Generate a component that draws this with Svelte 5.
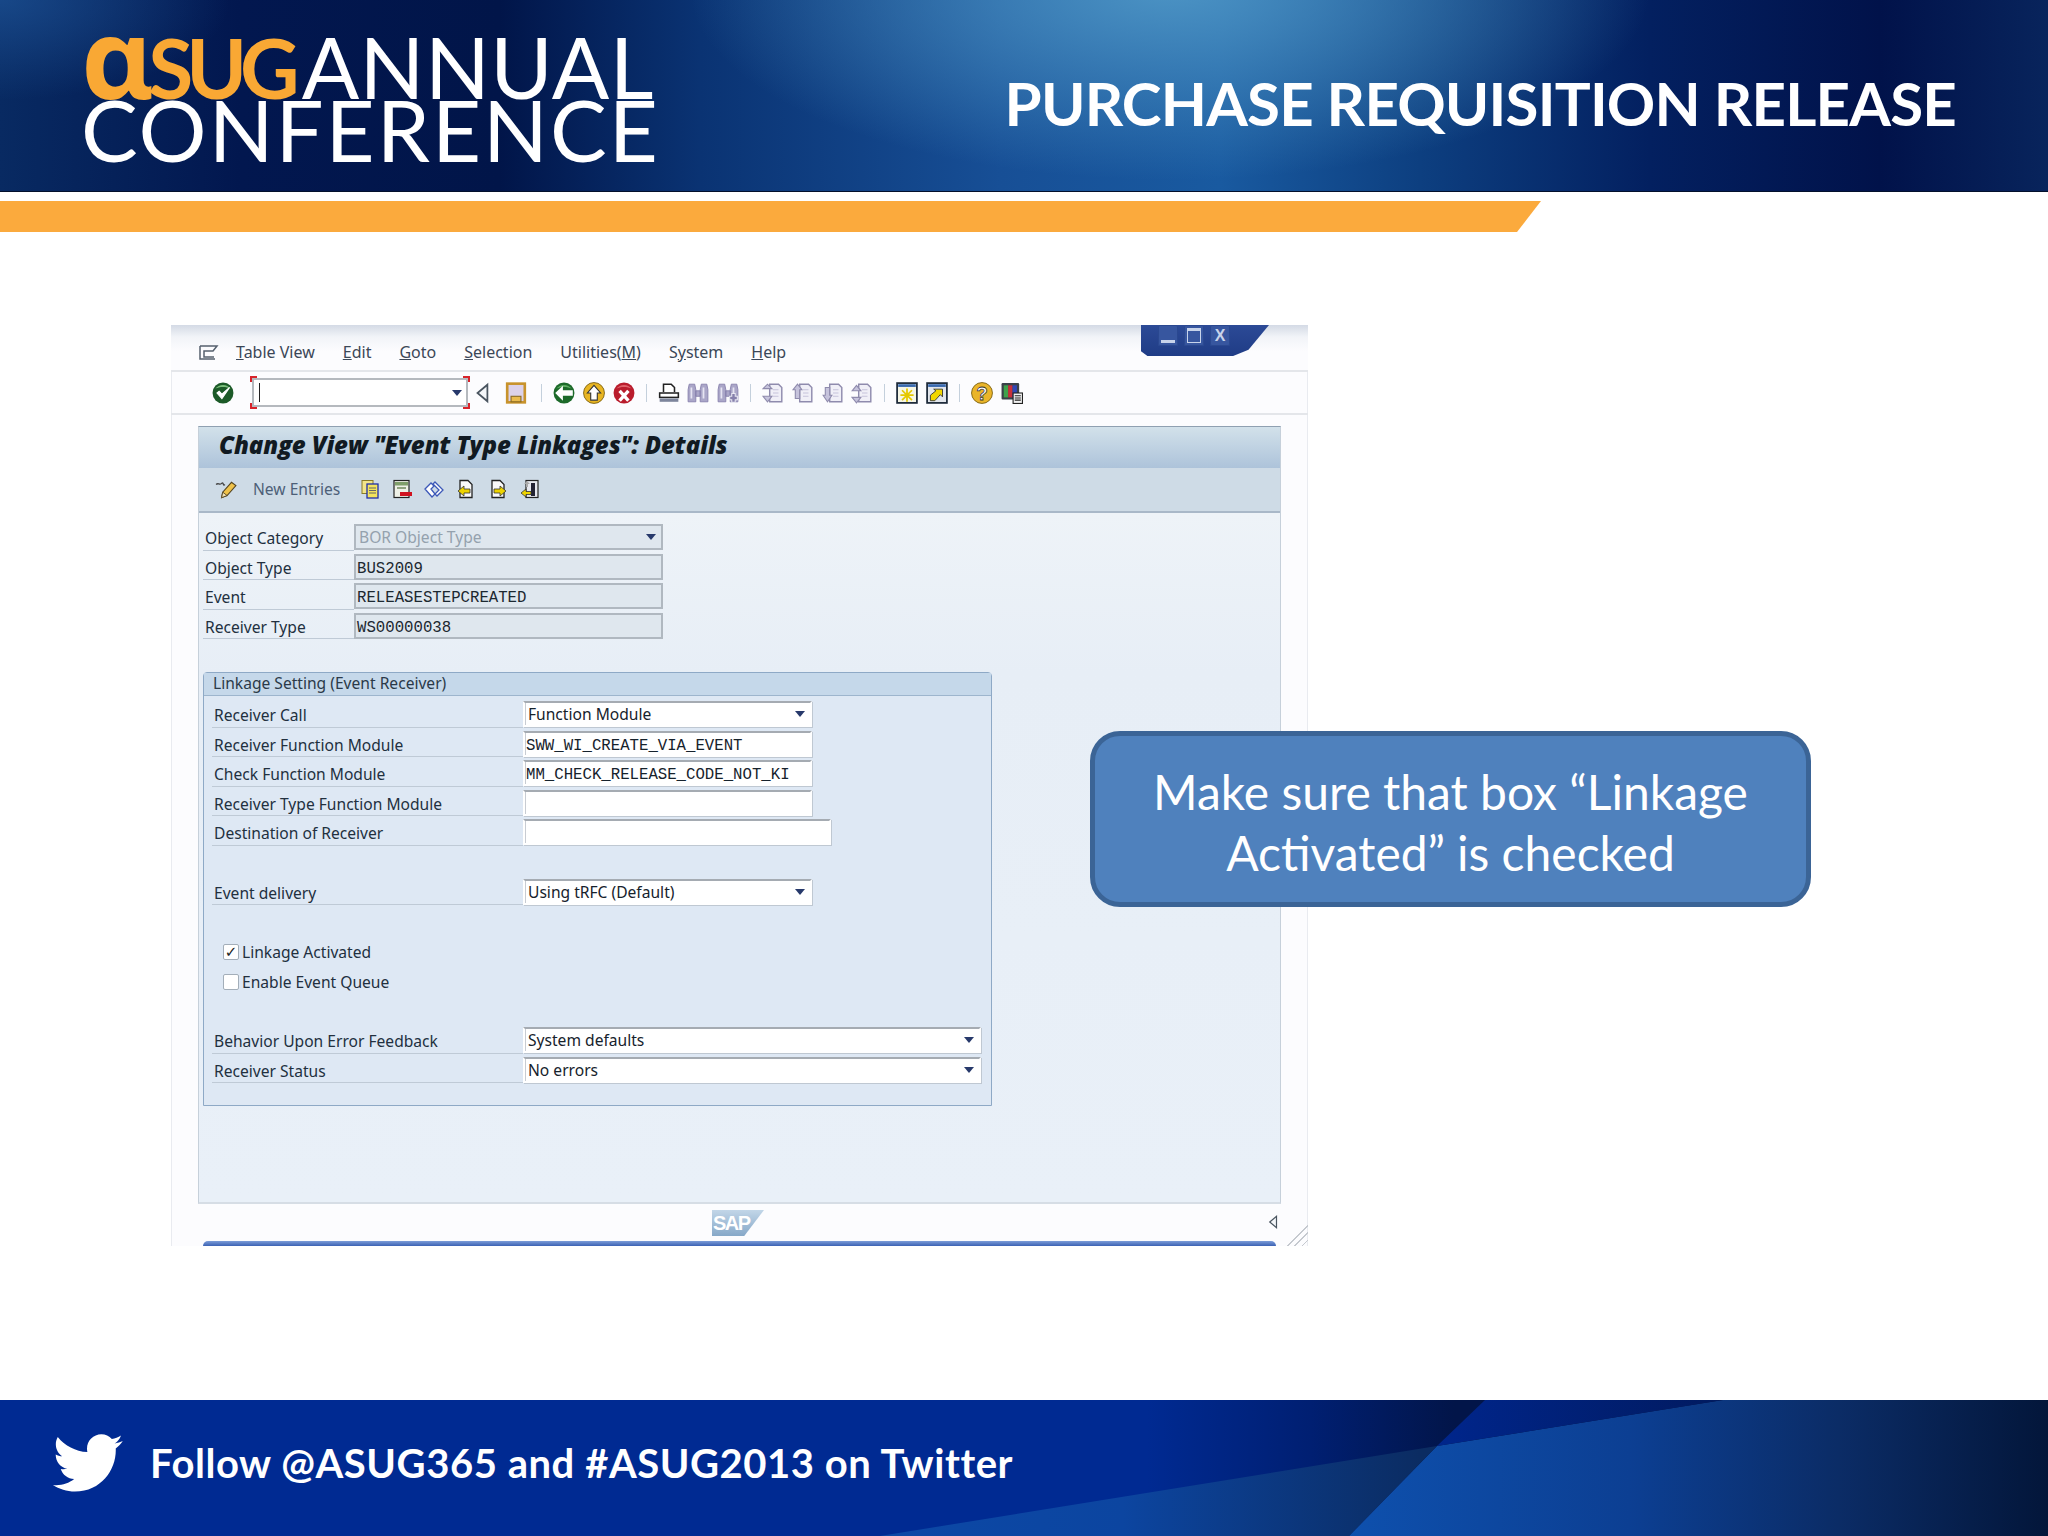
<script>
  const menus = [
    { u: 'T', rest: 'able View' },
    { u: 'E', rest: 'dit' },
    { u: 'G', rest: 'oto' },
    { u: 'S', rest: 'election' },
    { pre: 'Utilities(', u: 'M', rest: ')' },
    { pre: 'S', u: 'y', rest: 'stem' },
    { u: 'H', rest: 'elp' },
  ]
  const headerRows = [
    { label: 'Object Category', value: 'BOR Object Type', select: true },
    { label: 'Object Type', value: 'BUS2009', mono: true },
    { label: 'Event', value: 'RELEASESTEPCREATED', mono: true },
    { label: 'Receiver Type', value: 'WS00000038', mono: true },
  ]
  const receiverRows = [
    { label: 'Receiver Call', value: 'Function Module', select: true },
    { label: 'Receiver Function Module', value: 'SWW_WI_CREATE_VIA_EVENT', mono: true },
    { label: 'Check Function Module', value: 'MM_CHECK_RELEASE_CODE_NOT_KI', mono: true },
    { label: 'Receiver Type Function Module', value: '' },
    { label: 'Destination of Receiver', value: '', size: 'mid' },
  ]
  const errorRows = [
    { label: 'Behavior Upon Error Feedback', value: 'System defaults', select: true, size: 'long' },
    { label: 'Receiver Status', value: 'No errors', select: true, size: 'long' },
  ]
</script>

{#snippet icon(name)}
  <svg class="icon" viewBox="0 0 20 20" aria-hidden="true">
    {#if name === 'check'}
      <circle cx="10" cy="10" r="9.5" fill="#1c5a28" />
      <path d="M3 6a9 9 0 0 1 14 0c-4-2-10-2-14 0z" fill="#7cc07c" />
      <path d="M4.5 10l4.5 5 7-10-7 6-2.5-2.5z" fill="#fff" stroke="#fff" stroke-width="1" />
    {:else if name === 'tri'}
      <path d="M14 2.5v15L5 10z" fill="#f4f6f9" stroke="#4a5560" stroke-width="1.6" />
    {:else if name === 'save'}
      <rect x="2" y="1.500" width="16" height="17" fill="#dcd2ea" stroke="#c8932c" stroke-width="2.4" />
      <rect x="5.500" y="13" width="9" height="5" fill="#eabb4e" stroke="#8a6a22" />
    {:else if name === 'back'}
      <circle cx="10" cy="10" r="9.5" fill="#1d6a2a" />
      <path d="M3 6a9 9 0 0 1 14 0c-4-2-10-2-14 0z" fill="#5fae62" />
      <path d="M2 10l7-6.5v4h9v5H9V17z" fill="#fff" />
    {:else if name === 'up'}
      <circle cx="10" cy="10" r="9.5" fill="#e8b522" stroke="#7a5e10" stroke-width=".8" />
      <path d="M10 3l6 7h-3v6.5H7V10H4z" fill="#fff" stroke="#333" stroke-width="1" />
    {:else if name === 'cancel'}
      <circle cx="10" cy="10" r="9.5" fill="#b91c2c" />
      <path d="M3 6a9 9 0 0 1 14 0c-4-2-10-2-14 0z" fill="#e0626a" />
      <path d="M6 8l8 9M14 8l-8 9" stroke="#fff" stroke-width="3" />
    {:else if name === 'print'}
      <path d="M5 9V2h7l3 3v4" fill="#fff" stroke="#222" stroke-width="1.4" />
      <rect x="1.5" y="10" width="17" height="4" fill="#fff" stroke="#222" stroke-width="1.4" />
      <rect x="1.5" y="15" width="17" height="3" fill="#7d859c" />
    {:else if name === 'find' || name === 'findnext'}
      <path d="M1 7l1-5h5l1 5v11H1zM12 7l1-5h5l1 5v11h-7zM8 8h4v5H8z" fill="#aaa6c8" stroke="#8680ac" stroke-width=".8" />
      <path d="M4 5v10M15 5v10" stroke="#e6e4f2" stroke-width="1.6" />
      {#if name === 'findnext'}
        <path d="M15 10v9M11 14.5h8" stroke="#e8e8f2" stroke-width="4" />
        <path d="M15 11v7M12 14.5h6" stroke="#8680ac" stroke-width="2.2" />
      {/if}
    {:else if name === 'first' || name === 'prev' || name === 'next' || name === 'last'}
      <path d="M7 2h8l3 3v13H7z" fill="#f0eff7" stroke="#8f8bad" stroke-width="1.3" />
      <path d="M10 7h5M10 10h5M10 13h5" stroke="#c6c3dc" />
      {#if name === 'first'}
        <path d="M1 6l4-4 4 4zM1 13l4 5 4-5z" fill="#c6c3dc" stroke="#8f8bad" />
      {:else if name === 'prev'}
        <path d="M1 7l4-5 4 5H7v8H3V7z" fill="#c6c3dc" stroke="#8f8bad" />
      {:else if name === 'next'}
        <path d="M1 12l4 6 4-6H7V5H3v7z" fill="#c6c3dc" stroke="#8f8bad" />
      {:else}
        <path d="M1 8l4-5 4 5zM1 14l4 5 4-5z" fill="#c6c3dc" stroke="#8f8bad" />
      {/if}
    {:else if name === 'session'}
      <rect x="1" y="1" width="18" height="18" fill="#f6f6e6" stroke="#1d2a3a" stroke-width="1.6" />
      <rect x="2" y="2" width="16" height="2.5" fill="#3a6ab0" />
      <path d="M10 6v12M4 12h12M5.5 7.5l9 9M14.5 7.5l-9 9" stroke="#e5c800" stroke-width="1.6" />
    {:else if name === 'shortcut'}
      <rect x="1" y="1" width="18" height="18" fill="#e2e6ec" stroke="#1d2a3a" stroke-width="1.6" />
      <rect x="2" y="2" width="16" height="2.5" fill="#3a6ab0" />
      <path d="M4 17v-5l5-4-2-1.5h8v7l-2-2-5 5.500z" fill="#f2d700" stroke="#333" stroke-width=".8" />
    {:else if name === 'help'}
      <circle cx="10" cy="10" r="9.5" fill="#eab52a" stroke="#7a5e10" stroke-width=".8" />
      <text x="10" y="16" text-anchor="middle" font-size="17" font-weight="700" font-family="Liberation Sans, sans-serif" fill="#fff" stroke="#333" stroke-width=".7">?</text>
    {:else if name === 'layout'}
      <rect x="0.5" y="1" width="16" height="15" rx="1" fill="#3a4149" />
      <rect x="2.5" y="3" width="4" height="11" fill="#3fa24c" />
      <rect x="6.500" y="3" width="4" height="11" fill="#c9303a" />
      <rect x="10.5" y="3" width="4" height="11" fill="#3147b5" />
      <rect x="11" y="10" width="8.500" height="9.500" fill="#f2f2f2" stroke="#222" />
      <path d="M12.5 12.5h5.500M12.5 14.5h5.500M12.5 16.5h5.500" stroke="#222" />
    {:else if name === 'pencil'}
      <path d="M6 17l1-5 8-9 4 3-8 9z" fill="#efc24a" stroke="#554520" stroke-width="1" />
      <path d="M6 17l1-5 4 3z" fill="#f3e2b5" stroke="#554520" stroke-width=".8" />
      <path d="M1 5c2-2 3 1 5-1s1 3 3 1" fill="none" stroke="#444" stroke-width="1.2" />
    {:else if name === 'copy'}
      <rect x="2" y="1.5" width="11" height="13" fill="#f2e58a" stroke="#8a7b26" />
      <rect x="7" y="5" width="11" height="14" fill="#f3e35e" stroke="#1f2fa8" stroke-width="1.3" />
      <path d="M9 9h7M9 11.5h7M9 14h7" stroke="#666" />
    {:else if name === 'delete'}
      <rect x="2" y="1.5" width="15" height="17" fill="#eef0e6" stroke="#222" stroke-width="1.2" />
      <rect x="3" y="3" width="13" height="3.5" fill="#7f9e6a" />
      <rect x="5" y="8" width="9" height="2" fill="#8fa27f" />
      <rect x="8" y="13" width="12" height="4" fill="#d0121f" />
    {:else if name === 'undo'}
      <path d="M1 10l6-6 3 3-3 3 4 5-3 3zM11 3l8 8-6 6-2-2 4-4-6-6z" fill="#fff" stroke="#3c58b8" stroke-width="1.3" />
    {:else if name === 'pgprev' || name === 'pgnext' || name === 'pglast'}
      {#if name === 'pglast'}
        <rect x="6" y="1.5" width="12" height="17" fill="#e6e8ee" stroke="#222" stroke-width="1.2" />
        <path d="M13 4v13" stroke="#223" stroke-width="4" />
        <path d="M7 2l-3 3h2v3h2V5h2z" fill="#aaa" />
        <path d="M1 14l5-4v2.5h5v3H6V18z" fill="#eed400" stroke="#333" stroke-width=".8" />
      {:else}
        <path d="M4 1.5h8l4 4v13H4z" fill="#fafafa" stroke="#222" stroke-width="1.3" />
        {#if name === 'pgprev'}
          <path d="M2 12l6-5v3h6v4H8v3z" fill="#eed400" stroke="#333" stroke-width=".8" />
        {:else}
          <path d="M18 12l-6-5v3H6v4h6v3z" fill="#eed400" stroke="#333" stroke-width=".8" />
        {/if}
      {/if}
    {:else if name === 'menu'}
      <path d="M1.5 4h17l-4 5h-9v6h10M1.5 4v13h15" fill="none" stroke="#55606e" stroke-width="1.5" />
    {/if}
  </svg>
{/snippet}

{#snippet arrow()}
  <span class="arrow"></span>
{/snippet}

{#snippet row(r)}
  <div class="row">
    <span class="label">{r.label}</span>
    <span class="field {r.size ?? ''}" class:mono={r.mono}>
      {r.value}
      {#if r.select}{@render arrow()}{/if}
    </span>
  </div>
{/snippet}

<div class="slide">
  <header class="banner">
    <div class="logo">
      <div class="logo-line"><span class="asug"><span class="round">ɑ</span>SUG</span><span class="annual">ANNUAL</span></div>
      <div class="logo-line conf">CONFERENCE</div>
    </div>
    <h1>PURCHASE REQUISITION RELEASE</h1>
  </header>
  <div class="stripe"></div>

  <main class="main">
    <div class="window">
      <div class="menubar">
        <span class="menu-icon">{@render icon('menu')}</span>
        {#each menus as m}
          <span class="menu">{m.pre ?? ''}<u>{m.u}</u>{m.rest}</span>
        {/each}
        <div class="win-tab">
          <span class="win-btn"><i class="min"></i></span>
          <span class="win-btn"><i class="max"></i></span>
          <span class="win-btn">X</span>
        </div>
      </div>

      <div class="toolbar">
        <span class="slot">{@render icon('check')}</span>
        <span class="ok-field"><span class="caret"></span>{@render arrow()}</span>
        <span class="slot tri">{@render icon('tri')}</span>
        <span class="slot save">{@render icon('save')}</span>
        <span class="sep first-sep"></span>
        <span class="slot">{@render icon('back')}</span>
        <span class="slot">{@render icon('up')}</span>
        <span class="slot">{@render icon('cancel')}</span>
        <span class="sep"></span>
        <span class="slot">{@render icon('print')}</span>
        <span class="slot">{@render icon('find')}</span>
        <span class="slot">{@render icon('findnext')}</span>
        <span class="sep"></span>
        <span class="slot">{@render icon('first')}</span>
        <span class="slot">{@render icon('prev')}</span>
        <span class="slot">{@render icon('next')}</span>
        <span class="slot">{@render icon('last')}</span>
        <span class="sep"></span>
        <span class="slot">{@render icon('session')}</span>
        <span class="slot">{@render icon('shortcut')}</span>
        <span class="sep"></span>
        <span class="slot">{@render icon('help')}</span>
        <span class="slot">{@render icon('layout')}</span>
      </div>

      <section class="panel">
        <h2>Change View "Event Type Linkages": Details</h2>
        <div class="app-bar">
          <span class="tool pencil">{@render icon('pencil')}</span>
          <span class="new">New Entries</span>
          <span class="tool">{@render icon('copy')}</span>
          <span class="tool">{@render icon('delete')}</span>
          <span class="tool">{@render icon('undo')}</span>
          <span class="tool">{@render icon('pgprev')}</span>
          <span class="tool">{@render icon('pgnext')}</span>
          <span class="tool">{@render icon('pglast')}</span>
        </div>

        <div class="content">
          <div class="head-rows">
            {#each headerRows as r}{@render row(r)}{/each}
          </div>

          <div class="group">
            <div class="group-title">Linkage Setting (Event Receiver)</div>
            <div class="group-body">
              {#each receiverRows as r}{@render row(r)}{/each}
              <div class="delivery">
                {@render row({ label: 'Event delivery', value: 'Using tRFC (Default)', select: true })}
              </div>
              <div class="checks">
                <div class="check-row"><span class="box">✓</span>Linkage Activated</div>
                <div class="check-row"><span class="box"></span>Enable Event Queue</div>
              </div>
              {#each errorRows as r}{@render row(r)}{/each}
            </div>
          </div>
        </div>
      </section>

      <footer class="status">
        <span class="sap">SAP</span>
        <span class="status-tri">{@render icon('tri')}</span>
        <span class="grip"></span>
        <span class="task-bar"></span>
      </footer>
    </div>
  </main>

  <div class="callout">Make sure that box “Linkage<br />Activated” is checked</div>

  <footer class="foot">
    <svg class="foot-bg" viewBox="0 0 2048 136" preserveAspectRatio="none" aria-hidden="true">
      <defs>
        <linearGradient id="fbase" x1="0" x2="2048" y1="0" y2="0" gradientUnits="userSpaceOnUse">
          <stop offset="0" stop-color="#002a92" />
          <stop offset=".56" stop-color="#002a92" />
          <stop offset=".64" stop-color="#001f72" />
          <stop offset=".71" stop-color="#021549" />
        </linearGradient>
        <linearGradient id="fwedge" x1="880" x2="1420" y1="0" y2="0" gradientUnits="userSpaceOnUse">
          <stop offset="0" stop-color="#0c48a6" />
          <stop offset=".45" stop-color="#0c45a0" />
          <stop offset="1" stop-color="#0b2c62" />
        </linearGradient>
        <linearGradient id="fright" x1="1350" x2="2048" y1="0" y2="0" gradientUnits="userSpaceOnUse">
          <stop offset="0" stop-color="#0e50ad" />
          <stop offset=".4" stop-color="#0c3f93" />
          <stop offset=".7" stop-color="#0b2c66" />
          <stop offset="1" stop-color="#03163a" />
        </linearGradient>
        <linearGradient id="ftop" x1="1450" x2="1730" y1="0" y2="0" gradientUnits="userSpaceOnUse">
          <stop offset="0" stop-color="#00258a" />
          <stop offset="1" stop-color="#011a5e" />
        </linearGradient>
      </defs>
      <rect width="2048" height="136" fill="url(#fbase)" />
      <path d="M1723 0H2048V136H1349L1437 46z" fill="url(#fright)" />
      <path d="M1485 0H1723L1437 46z" fill="url(#ftop)" />
      <path d="M880 136L1437 46 1349 136z" fill="url(#fwedge)" />
    </svg>
    <svg class="bird" viewBox="0 0 24 20" preserveAspectRatio="none" aria-hidden="true">
      <path transform="translate(0 -2)" d="M23.643 4.937c-.835.37-1.732.62-2.675.733.962-.576 1.7-1.49 2.048-2.578-.9.534-1.897.922-2.958 1.13-.85-.904-2.06-1.47-3.4-1.47-2.572 0-4.658 2.086-4.658 4.66 0 .364.042.718.12 1.06-3.873-.195-7.304-2.05-9.602-4.868-.4.69-.63 1.49-.63 2.342 0 1.616.823 3.043 2.072 3.878-.764-.025-1.482-.234-2.11-.583v.06c0 2.257 1.605 4.14 3.737 4.568-.392.106-.803.162-1.227.162-.3 0-.593-.028-.877-.082.593 1.85 2.313 3.198 4.352 3.234-1.595 1.25-3.604 1.995-5.786 1.995-.376 0-.747-.022-1.112-.065 2.062 1.323 4.51 2.093 7.14 2.093 8.57 0 13.255-7.098 13.255-13.254 0-.2-.005-.402-.014-.602.91-.658 1.7-1.477 2.323-2.41z" fill="#fff" />
    </svg>
    <span class="foot-text">Follow @ASUG365 and #ASUG2013 on Twitter</span>
  </footer>
</div>

<style>
  :global(body) { margin: 0; background: #fff; }

  .slide {
    position: relative;
    width: 2048px;
    height: 1536px;
    display: flex;
    flex-direction: column;
    overflow: hidden;
    font-family: Lato, sans-serif;
  }

  /* banner */
  .banner {
    height: 156px;
    border-bottom: 1px solid #03102c;
    display: flex;
    justify-content: space-between;
    padding: 35px 92px 0 81px;
    box-sizing: content-box;
    background:
      radial-gradient(ellipse 480px 190px at 1170px -10px, rgba(78, 150, 198, .95), rgba(78, 150, 198, 0)),
      radial-gradient(ellipse 230px 100px at 0 0, rgba(30, 84, 152, .7), rgba(30, 84, 152, 0)),
      linear-gradient(90deg, #082a62 0, #02174f 240px, #011549 500px, #0a3373 700px, #174f96 1000px, #195aa0 1220px, #0d3f80 1420px, #032060 1650px, #01124a 1880px, #08245c 2048px);
  }

  .logo { color: #fff; width: 590px; }

  .logo-line {
    display: flex;
    align-items: baseline;
    height: 63px;
    line-height: 63px;
    font-size: 85px;
    font-weight: 400;
  }

  .asug {
    color: #f9a834;
    font-weight: 700;
    letter-spacing: -7px;
    margin-right: 9px;
    font-size: 82px;
  }

  .round {
    font-family: "Noto Sans", sans-serif;
    font-size: 112px;
    line-height: 40px;
    letter-spacing: -4px;
    font-weight: 700;
  }

  .annual { letter-spacing: .4px; }
  .conf { letter-spacing: 2px; }

  h1 {
    margin: 33px 0 0;
    font-size: 60px;
    line-height: 70px;
    font-weight: 700;
    letter-spacing: -.8px;
    color: #fff;
    white-space: nowrap;
  }

  .stripe {
    margin-top: 9px;
    width: 1541px;
    height: 31px;
    background: #fbaa3d;
    clip-path: polygon(0 0, 100% 0, calc(100% - 24px) 100%, 0 100%);
  }

  /* sap window */
  .main { flex: 1; padding: 93px 0 0 171px; }

  .window {
    width: 1137px;
    height: 921px;
    background: #fcfcfe;
    box-shadow: inset 1px 0 0 #e9ebf0, inset -1px 0 0 #e9ebf0;
    font-family: "Noto Sans", sans-serif;
    font-size: 15.6px;
    color: #1d2833;
    display: flex;
    flex-direction: column;
  }

  .menubar {
    position: relative;
    height: 47px;
    box-sizing: border-box;
    border-bottom: 2px solid #e4e6ea;
    display: flex;
    align-items: center;
    padding: 8px 0 0 27px;
    gap: 28px;
    background: linear-gradient(#d4dae5 0, #f2f4f8 12px, #fcfcfe 26px);
    color: #3b4757;
    font-size: 16px;
  }

  .menu-icon { width: 21px; height: 20px; margin-right: -11px; }
  .menu-icon .icon { width: 21px; height: 20px; }

  .win-tab {
    position: absolute;
    top: 0;
    left: 970px;
    width: 128px;
    height: 31px;
    display: flex;
    gap: 6px;
    padding-left: 17px;
    box-sizing: border-box;
    background: linear-gradient(#2c4a96, #1f3c86);
    clip-path: polygon(0 0, 100% 0, 84% 80%, 72% 100%, 5% 100%, 0 85%);
  }

  .win-btn {
    width: 20px;
    height: 21px;
    border-radius: 2px;
    background: #37569f;
    box-shadow: inset 0 0 0 1px #2a4890;
    color: #c7d3ea;
    font-family: "Liberation Sans", sans-serif;
    font-size: 16px;
    font-weight: 700;
    display: flex;
    align-items: center;
    justify-content: center;
    position: relative;
  }

  .win-btn i { position: absolute; background: #c7d3ea; }
  .win-btn .min { left: 3px; right: 3px; bottom: 3px; height: 3px; }
  .win-btn .max { left: 3px; right: 3px; top: 3px; bottom: 3px; background: none; border: 1px solid #c7d3ea; border-top-width: 3px; }

  .toolbar {
    height: 43px;
    box-sizing: border-box;
    border-bottom: 2px solid #e4e6ea;
    display: flex;
    align-items: center;
    padding-left: 37px;
  }

  .slot {
    width: 29.8px;
    height: 22px;
    display: flex;
    align-items: center;
    justify-content: center;
    flex: none;
  }

  .slot.tri { margin-left: -2px; }
  .slot.save { margin-left: 4px; }

  .sep { width: 15px; height: 22px; position: relative; flex: none; }
  .sep::after { content: ''; position: absolute; left: 7px; top: 2px; bottom: 2px; width: 1px; background: #c4d0dc; }
  .first-sep { margin-left: 3px; }

  .icon { width: 22px; height: 22px; display: block; flex: none; }

  .ok-field {
    position: relative;
    flex: none;
    width: 220px;
    height: 33px;
    margin-left: 12px;
    box-sizing: border-box;
    padding: 0 8px;
    display: flex;
    align-items: center;
    justify-content: space-between;
    background:
      linear-gradient(#d8232a, #d8232a) 0 0 / 7px 2px no-repeat,
      linear-gradient(#d8232a, #d8232a) 0 0 / 2px 6px no-repeat,
      linear-gradient(#d8232a, #d8232a) 100% 0 / 7px 2px no-repeat,
      linear-gradient(#d8232a, #d8232a) 100% 0 / 2px 6px no-repeat,
      linear-gradient(#d8232a, #d8232a) 0 100% / 7px 2px no-repeat,
      linear-gradient(#d8232a, #d8232a) 0 100% / 2px 6px no-repeat,
      linear-gradient(#d8232a, #d8232a) 100% 100% / 7px 2px no-repeat,
      linear-gradient(#d8232a, #d8232a) 100% 100% / 2px 6px no-repeat,
      linear-gradient(#fff, #fff) 3px 3px / 214px 27px no-repeat;
    outline: 2px solid #b5b9be;
    outline-offset: -4px;
  }

  .caret { width: 1px; height: 19px; background: #222; margin-left: 1px; }

  .arrow {
    width: 0;
    height: 0;
    border-left: 5.5px solid transparent;
    border-right: 5.5px solid transparent;
    border-top: 6px solid #27396b;
    flex: none;
  }

  .panel {
    margin: 11px 0 0 27px;
    width: 1083px;
    height: 778px;
    flex: none;
    box-sizing: border-box;
    border: 1px solid #c6d0da;
    border-top-color: #8fa0b1;
    border-bottom: 2px solid #d6dde5;
    background: #e9f0f8;
    display: flex;
    flex-direction: column;
  }

  h2 {
    margin: 0;
    height: 41px;
    padding-left: 20px;
    font-family: "Open Sans", sans-serif;
    font-size: 24px;
    line-height: 36px;
    font-style: italic;
    font-weight: 800;
    letter-spacing: -.1px;
    color: #111a22;
    background: linear-gradient(#d2e1ea, #adc3da);
    white-space: nowrap;
  }

  .app-bar {
    height: 45px;
    flex: none;
    box-sizing: border-box;
    border-bottom: 2px solid #a9b8c8;
    background: #cedbe6;
    display: flex;
    align-items: center;
    gap: 12px;
    padding: 0 0 2px 16px;
  }

  .tool { width: 20px; height: 20px; flex: none; }
  .tool .icon { width: 20px; height: 20px; }
  .tool.pencil { width: 22px; margin-right: -1px; }
  .tool.pencil .icon { width: 22px; height: 22px; }
  .new { color: #4d5f78; width: 96px; margin: 0 -1px 0 5px; }

  .content {
    flex: 1;
    padding: 11px 0 0 4px;
    background: linear-gradient(#eef3f8, #e7eef6 160px, #e9f0f8);
  }

  .row {
    display: flex;
    height: 29.5px;
    box-sizing: border-box;
  }

  .label {
    width: 151px;
    box-sizing: border-box;
    height: 26.5px;
    padding: 1px 0 0 2px;
    line-height: 26px;
    border-bottom: 1.5px solid #bfcad6;
    white-space: nowrap;
    color: #22303f;
  }

  .field {
    width: 309px;
    height: 26px;
    box-sizing: border-box;
    display: flex;
    align-items: center;
    justify-content: space-between;
    padding: 0 5px 0 3px;
    line-height: 20px;
    border: 2px solid #b0b8c0;
    background: #dfe7ee;
    color: #2b3a46;
    white-space: nowrap;
  }

  .field.mono {
    font-family: "Liberation Mono", monospace;
    font-size: 15.7px;
    padding: 4px 5px 0 1px;
    color: #1c2830;
  }

  .head-rows .row:first-child .field { color: #94a1ad; }

  .group {
    margin-top: 30px;
    width: 789px;
    box-sizing: border-box;
    border: 1px solid #8ea9c6;
    border-radius: 4px 4px 0 0;
    background: #dee8f4;
  }

  .group-title {
    height: 22px;
    line-height: 20px;
    padding-left: 9px;
    background: #c5d8ea;
    border-bottom: 1px solid #9db5cd;
    color: #2b3a49;
  }

  .group-body { padding: 5px 0 19px 8px; }

  .group-body .label { width: 311px; }

  .group-body .field {
    width: 289px;
    background: #fff;
    border-color: #fff;
    border-top: 2px solid #a5abb2;
    box-shadow: inset 1px 0 0 #c8ccd2, 1px 1px 0 #bfc8d2;
    color: #16222c;
  }

  .group-body .field.mid { width: 308px; }
  .group-body .field.long { width: 458px; }

  .delivery { margin-top: 30px; }

  .checks { margin: 29.5px 0 30.5px 11px; display: flex; flex-direction: column; }

  .check-row {
    height: 29.5px;
    display: flex;
    align-items: center;
    gap: 3px;
    color: #22303f;
  }

  .box {
    width: 16px;
    height: 16px;
    box-sizing: border-box;
    background: #fff;
    border: 1px solid #a3aeb9;
    border-radius: 2px;
    font-size: 15px;
    line-height: 14px;
    text-align: center;
    color: #222;
    font-family: "DejaVu Sans", sans-serif;
  }

  .status { position: relative; flex: 1; }

  .sap {
    position: absolute;
    left: 541px;
    top: 6px;
    width: 52px;
    height: 26px;
    background: linear-gradient(#c2d6e8, #86a8c8);
    clip-path: polygon(0 0, 100% 0, 62% 100%, 0 100%);
    color: #fff;
    font-family: "Liberation Sans", sans-serif;
    font-weight: 700;
    font-size: 20px;
    line-height: 27px;
    letter-spacing: -1.5px;
    padding-left: 1px;
    box-sizing: border-box;
  }

  .status-tri { position: absolute; left: 1095px; top: 8px; }
  .status-tri .icon { width: 15px; height: 20px; }

  .grip {
    position: absolute;
    right: 0;
    bottom: 0;
    width: 24px;
    height: 24px;
    background: repeating-linear-gradient(135deg, transparent 0 4px, #c5c9cf 4px 5px);
    clip-path: polygon(100% 0, 100% 100%, 0 100%);
  }

  .task-bar {
    position: absolute;
    left: 32px;
    width: 1073px;
    bottom: 0;
    height: 5px;
    border-radius: 8px 8px 0 0;
    background: linear-gradient(#7b9cd8, #3c62b4);
  }

  /* callout sits on top of the sap window */
  .callout {
    position: absolute;
    left: 1090px;
    top: 731px;
    width: 721px;
    height: 176px;
    box-sizing: border-box;
    border: 5px solid #3b6496;
    border-radius: 30px;
    background: #4f81bd;
    color: #fff;
    font-size: 48px;
    line-height: 61px;
    text-align: center;
    padding-top: 25px;
  }

  /* footer */
  .foot {
    position: relative;
    flex: none;
    height: 136px;
    display: flex;
    align-items: center;
    padding: 0 0 10px 50px;
    box-sizing: border-box;
  }

  .foot-bg { position: absolute; inset: 0; width: 100%; height: 100%; }

  .bird { position: relative; width: 74px; height: 62px; flex: none; }

  .foot-text {
    position: relative;
    margin-left: 26px;
    font-size: 40px;
    font-weight: 700;
    letter-spacing: .55px;
    color: #fff;
    white-space: nowrap;
  }
</style>
